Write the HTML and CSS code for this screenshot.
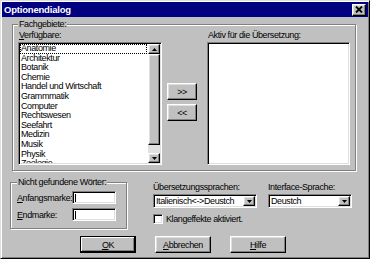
FILE: index.html
```html
<!DOCTYPE html>
<html lang="de">
<head>
<meta charset="utf-8">
<title>Optionendialog</title>
<link rel="stylesheet" href="styles.css">
</head>
<body>
<div class="window">
  <div class="titlebar">
    <span class="title">Optionendialog</span>
    <button class="close" aria-label="Schließen">
      <svg width="8" height="7" viewBox="0 0 8 7"><path d="M1 0.5 L7 6.5 M7 0.5 L1 6.5" stroke="#000" stroke-width="1.8" fill="none"/></svg>
    </button>
  </div>

  <fieldset class="group subjects">
    <legend>Fachgebiete:</legend>
    <div class="subjects-grid">
      <div class="col">
        <label class="lbl"><u>V</u>erfügbare:</label>
        <div class="sunken listbox">
          <ul class="items">
            <li class="focus">Anatomie</li>
            <li>Architektur</li>
            <li>Botanik</li>
            <li>Chemie</li>
            <li>Handel und Wirtschaft</li>
            <li>Grammmatik</li>
            <li>Computer</li>
            <li>Rechtswesen</li>
            <li>Seefahrt</li>
            <li>Medizin</li>
            <li>Musik</li>
            <li>Physik</li>
            <li>Zoologie</li>
          </ul>
          <div class="scrollbar">
            <div class="raised sb-btn"><svg width="5" height="3" viewBox="0 0 5 3"><path d="M2.5 0 L5 3 L0 3 Z" fill="#000"/></svg></div>
            <div class="raised thumb"></div>
            <div class="track"></div>
            <div class="raised sb-btn"><svg width="5" height="3" viewBox="0 0 5 3"><path d="M0 0 L5 0 L2.5 3 Z" fill="#000"/></svg></div>
          </div>
        </div>
      </div>
      <div class="movers">
        <button class="raised btn mover">&gt;&gt;</button>
        <button class="raised btn mover">&lt;&lt;</button>
      </div>
      <div class="col">
        <label class="lbl">Aktiv für die Übersetzung:</label>
        <div class="sunken listbox"></div>
      </div>
    </div>
  </fieldset>

  <div class="bottom">
    <fieldset class="group words">
      <legend>Nicht gefundene Wörter:</legend>
      <div class="field-row">
        <label class="field-lbl"><u>A</u>nfangsmarke:</label>
        <div class="sunken input"><span class="caret"></span></div>
      </div>
      <div class="field-row">
        <label class="field-lbl"><u>E</u>ndmarke:</label>
        <div class="sunken input"><span class="caret"></span></div>
      </div>
    </fieldset>

    <div class="lang-col trans">
      <label class="lbl">Übersetzungssprachen:</label>
      <div class="sunken combo">
        <span class="combo-text">Italienisch&lt;-&gt;Deustch</span>
        <span class="raised combo-btn"><svg width="5" height="3" viewBox="0 0 5 3"><path d="M0 0 L5 0 L2.5 3 Z" fill="#000"/></svg></span>
      </div>
      <div class="check-row">
        <span class="sunken checkbox"></span>
        <span>Klangeffekte aktiviert.</span>
      </div>
    </div>

    <div class="lang-col iface">
      <label class="lbl">Interface-Sprache:</label>
      <div class="sunken combo">
        <span class="combo-text">Deustch</span>
        <span class="raised combo-btn"><svg width="5" height="3" viewBox="0 0 5 3"><path d="M0 0 L5 0 L2.5 3 Z" fill="#000"/></svg></span>
      </div>
    </div>
  </div>

  <div class="actions">
    <button class="raised btn action default"><u>O</u>K</button>
    <button class="raised btn action"><u>A</u>bbrechen</button>
    <button class="raised btn action"><u>H</u>ilfe</button>
  </div>
</div>
</body>
</html>
```

FILE: styles.css
```css
* { box-sizing: border-box; }

html, body {
  margin: 0;
  padding: 0;
}

body {
  width: 370px;
  height: 259px;
  overflow: hidden;
  background: #c0c0c0;
  font-family: "Liberation Sans", Arial, sans-serif;
  font-size: 9px;
  letter-spacing: -0.4px;
  color: #000;
}

u { text-decoration: underline; text-underline-offset: 1px; }

.window {
  width: 370px;
  height: 259px;
  background: #c0c0c0;
  border: 1px solid;
  border-color: #dfdfdf #000 #000 #dfdfdf;
  box-shadow: inset 1px 1px 0 #fff, inset -1px -1px 0 #808080;
  padding: 1px;
  display: flex;
  flex-direction: column;
}

/* title bar */
.titlebar {
  height: 15px;
  flex: none;
  background: #000080;
  color: #fff;
  display: flex;
  align-items: center;
  justify-content: space-between;
  padding: 0 2px;
}

.title {
  font-weight: bold;
  font-size: 9.5px;
  letter-spacing: -0.2px;
}

.close {
  width: 14px;
  height: 12px;
  padding: 0;
  margin: 0;
  display: flex;
  align-items: center;
  justify-content: center;
  background: #c0c0c0;
  border: 1px solid;
  border-color: #fff #000 #000 #fff;
  box-shadow: inset -1px -1px 0 #808080, inset 1px 1px 0 #dfdfdf;
}

/* 3d helpers */
.raised {
  background: #c0c0c0;
  border: 1px solid;
  border-color: #fff #000 #000 #fff;
  box-shadow: inset -1px -1px 0 #808080, inset 1px 1px 0 #dfdfdf;
}

.sunken {
  background: #fff;
  border: 1px solid;
  border-color: #808080 #fff #fff #808080;
  box-shadow: inset 1px 1px 0 #000, inset -1px -1px 0 #dfdfdf;
  padding: 1px;
}

/* group boxes */
.group {
  margin: 0;
  min-width: 0;
  border: 1px solid #808080;
  box-shadow: inset 1px 1px 0 #fff, 1px 1px 0 #fff;
}

.group legend {
  padding: 0 1px;
  margin: 0;
  line-height: 10px;
  height: 10px;
  background: #c0c0c0;
}

.subjects {
  margin: 2px 12px 0 10px;
  padding: 0 5px 5px 5px;
  flex: none;
}

.subjects-grid {
  display: grid;
  grid-template-columns: 144px 1fr 143px;
}

.col {
  display: flex;
  flex-direction: column;
}

.lbl {
  display: block;
  line-height: 13px;
  height: 13px;
  padding-left: 1px;
  white-space: nowrap;
}

.listbox {
  height: 123px;
  display: flex;
  overflow: hidden;
}

.items {
  list-style: none;
  margin: 0;
  padding: 0;
  flex: 1;
  overflow: hidden;
  line-height: 9.6px;
}

.items li {
  padding-left: 1px;
  height: 9.6px;
  white-space: nowrap;
}

.items li.focus {
  outline: 1px dotted #000;
  outline-offset: -1px;
  margin-right: 1px;
}

.scrollbar {
  width: 12px;
  flex: none;
  display: flex;
  flex-direction: column;
}

.sb-btn {
  height: 10px;
  display: flex;
  align-items: center;
  justify-content: center;
}

.thumb {
  height: 91px;
}

.track {
  flex: 1;
  background: #e0e0e0;
}

.movers {
  display: flex;
  flex-direction: column;
  padding-top: 54px;
  padding-left: 5px;
  gap: 4px;
}

.btn {
  font-family: inherit;
  font-size: 9px;
  letter-spacing: -0.4px;
  color: #000;
  padding: 0;
  margin: 0;
  display: flex;
  align-items: center;
  justify-content: center;
}

.mover {
  width: 30px;
  height: 17px;
}

/* bottom area */
.bottom {
  height: 65px;
  flex: none;
  display: flex;
  align-items: flex-start;
}

.words {
  margin: 6px 0 0 8px;
  width: 117px;
  height: 52px;
  padding: 4px 10px 0 6px;
  display: flex;
  flex-direction: column;
  gap: 4px;
}

.field-row {
  display: flex;
  align-items: center;
  height: 13px;
}

.field-lbl {
  width: 56px;
  white-space: nowrap;
}

.input {
  width: 44px;
  height: 13px;
  display: flex;
  align-items: center;
  padding-left: 2px;
}

.caret {
  width: 1px;
  height: 8px;
  background: #000;
}

.lang-col {
  display: flex;
  flex-direction: column;
  margin-top: 11px;
}

.lang-col .lbl {
  line-height: 11px;
  height: 12px;
  padding-left: 0;
}

.trans {
  margin-left: 26px;
  width: 104px;
}

.iface {
  margin-left: 11px;
  width: 84px;
}

.combo {
  height: 14px;
  display: flex;
  align-items: stretch;
  padding: 1px 1px 1px 2px;
}

.combo-text {
  flex: 1;
  line-height: 10px;
  white-space: nowrap;
  overflow: hidden;
}

.combo-btn {
  width: 12px;
  flex: none;
  display: flex;
  align-items: center;
  justify-content: center;
}

.check-row {
  display: flex;
  align-items: center;
  gap: 3px;
  margin-top: 6px;
  white-space: nowrap;
}

.checkbox {
  width: 10px;
  height: 10px;
  flex: none;
}

/* action buttons */
.actions {
  display: flex;
  gap: 19px;
  padding-left: 78px;
  flex: none;
}

.action {
  width: 56px;
  height: 17px;
}

.action.default {
  border-color: #000;
  box-shadow: inset -1px -1px 0 #000, inset 1px 1px 0 #fff, inset -2px -2px 0 #808080;
}
```
